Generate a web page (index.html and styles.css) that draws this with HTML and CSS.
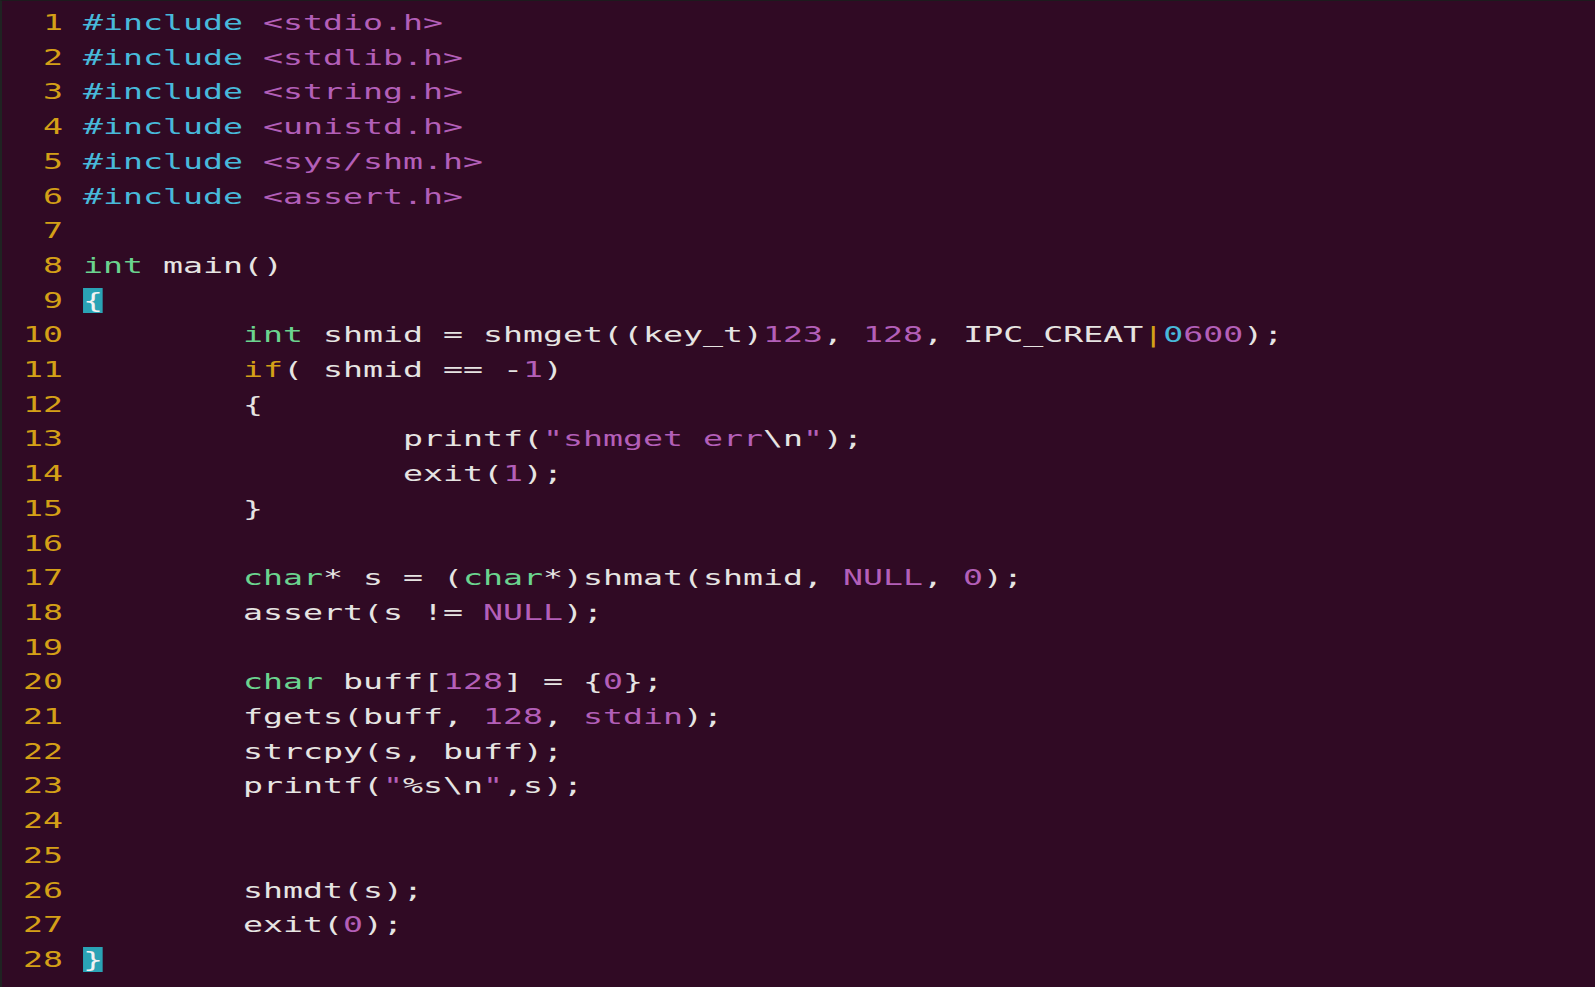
FILE: index.html
```html
<!DOCTYPE html>
<html lang="en">
<head>
<meta charset="utf-8">
<title>shm.c - vim</title>
<link rel="stylesheet" href="styles.css">
</head>
<body>
<main class="term">
<pre class="code"><span class="ln">  1</span> <span class="pp">#include</span> <span class="st">&lt;stdio.h&gt;</span>
<span class="ln">  2</span> <span class="pp">#include</span> <span class="st">&lt;stdlib.h&gt;</span>
<span class="ln">  3</span> <span class="pp">#include</span> <span class="st">&lt;string.h&gt;</span>
<span class="ln">  4</span> <span class="pp">#include</span> <span class="st">&lt;unistd.h&gt;</span>
<span class="ln">  5</span> <span class="pp">#include</span> <span class="st">&lt;sys/shm.h&gt;</span>
<span class="ln">  6</span> <span class="pp">#include</span> <span class="st">&lt;assert.h&gt;</span>
<span class="ln">  7</span>
<span class="ln">  8</span> <span class="ty">int</span> main()
<span class="ln">  9</span> <span class="cur">{</span>
<span class="ln"> 10</span>         <span class="ty">int</span> shmid = shmget((key_t)<span class="nu">123</span>, <span class="nu">128</span>, IPC_CREAT<span class="op">|</span><span class="oc">0</span><span class="nu">600</span>);
<span class="ln"> 11</span>         <span class="kw">if</span>( shmid == -<span class="nu">1</span>)
<span class="ln"> 12</span>         {
<span class="ln"> 13</span>                 printf(<span class="st">"shmget err</span><span class="sp">\n</span><span class="st">"</span>);
<span class="ln"> 14</span>                 exit(<span class="nu">1</span>);
<span class="ln"> 15</span>         }
<span class="ln"> 16</span>
<span class="ln"> 17</span>         <span class="ty">char</span>* s = (<span class="ty">char</span>*)shmat(shmid, <span class="nu">NULL</span>, <span class="nu">0</span>);
<span class="ln"> 18</span>         assert(s != <span class="nu">NULL</span>);
<span class="ln"> 19</span>
<span class="ln"> 20</span>         <span class="ty">char</span> buff[<span class="nu">128</span>] = {<span class="nu">0</span>};
<span class="ln"> 21</span>         fgets(buff, <span class="nu">128</span>, <span class="nu">stdin</span>);
<span class="ln"> 22</span>         strcpy(s, buff);
<span class="ln"> 23</span>         printf(<span class="st">"</span><span class="sp">%s\n</span><span class="st">"</span>,s);
<span class="ln"> 24</span>
<span class="ln"> 25</span>
<span class="ln"> 26</span>         shmdt(s);
<span class="ln"> 27</span>         exit(<span class="nu">0</span>);
<span class="ln"> 28</span> <span class="cur">}</span></pre>
</main>
</body>
</html>
```

FILE: styles.css
```css
html, body {
  margin: 0;
  padding: 0;
  background: #300a24;
}

.term {
  width: 1595px;
  height: 987px;
  box-sizing: border-box;
  border-top: 1px solid #1d1a1d;
  border-left: 2px solid #1f2322;
  background: #300a24;
  overflow: hidden;
  padding: 5px 0 0 1px;
}

.code {
  margin: 0;
  font-family: "DejaVu Sans Mono", "Liberation Mono", monospace;
  font-size: 22px;
  line-height: 34.7px;
  color: #e6e4e2;
  transform: scaleX(1.51);
  transform-origin: 0 0;
  white-space: pre;
}

.ln { color: #d4a017; }
.pp { color: #48b9da; }
.st { color: #b35fb8; }
.sp { color: #e6e4e2; }
.ty { color: #6bd38f; }
.kw { color: #d4a017; }
.nu { color: #b35fb8; }
.oc { color: #48b9da; }
.op { color: #d4a017; }

.cur {
  background: #2aa3b5;
  color: #f2f2f2;
}
```
